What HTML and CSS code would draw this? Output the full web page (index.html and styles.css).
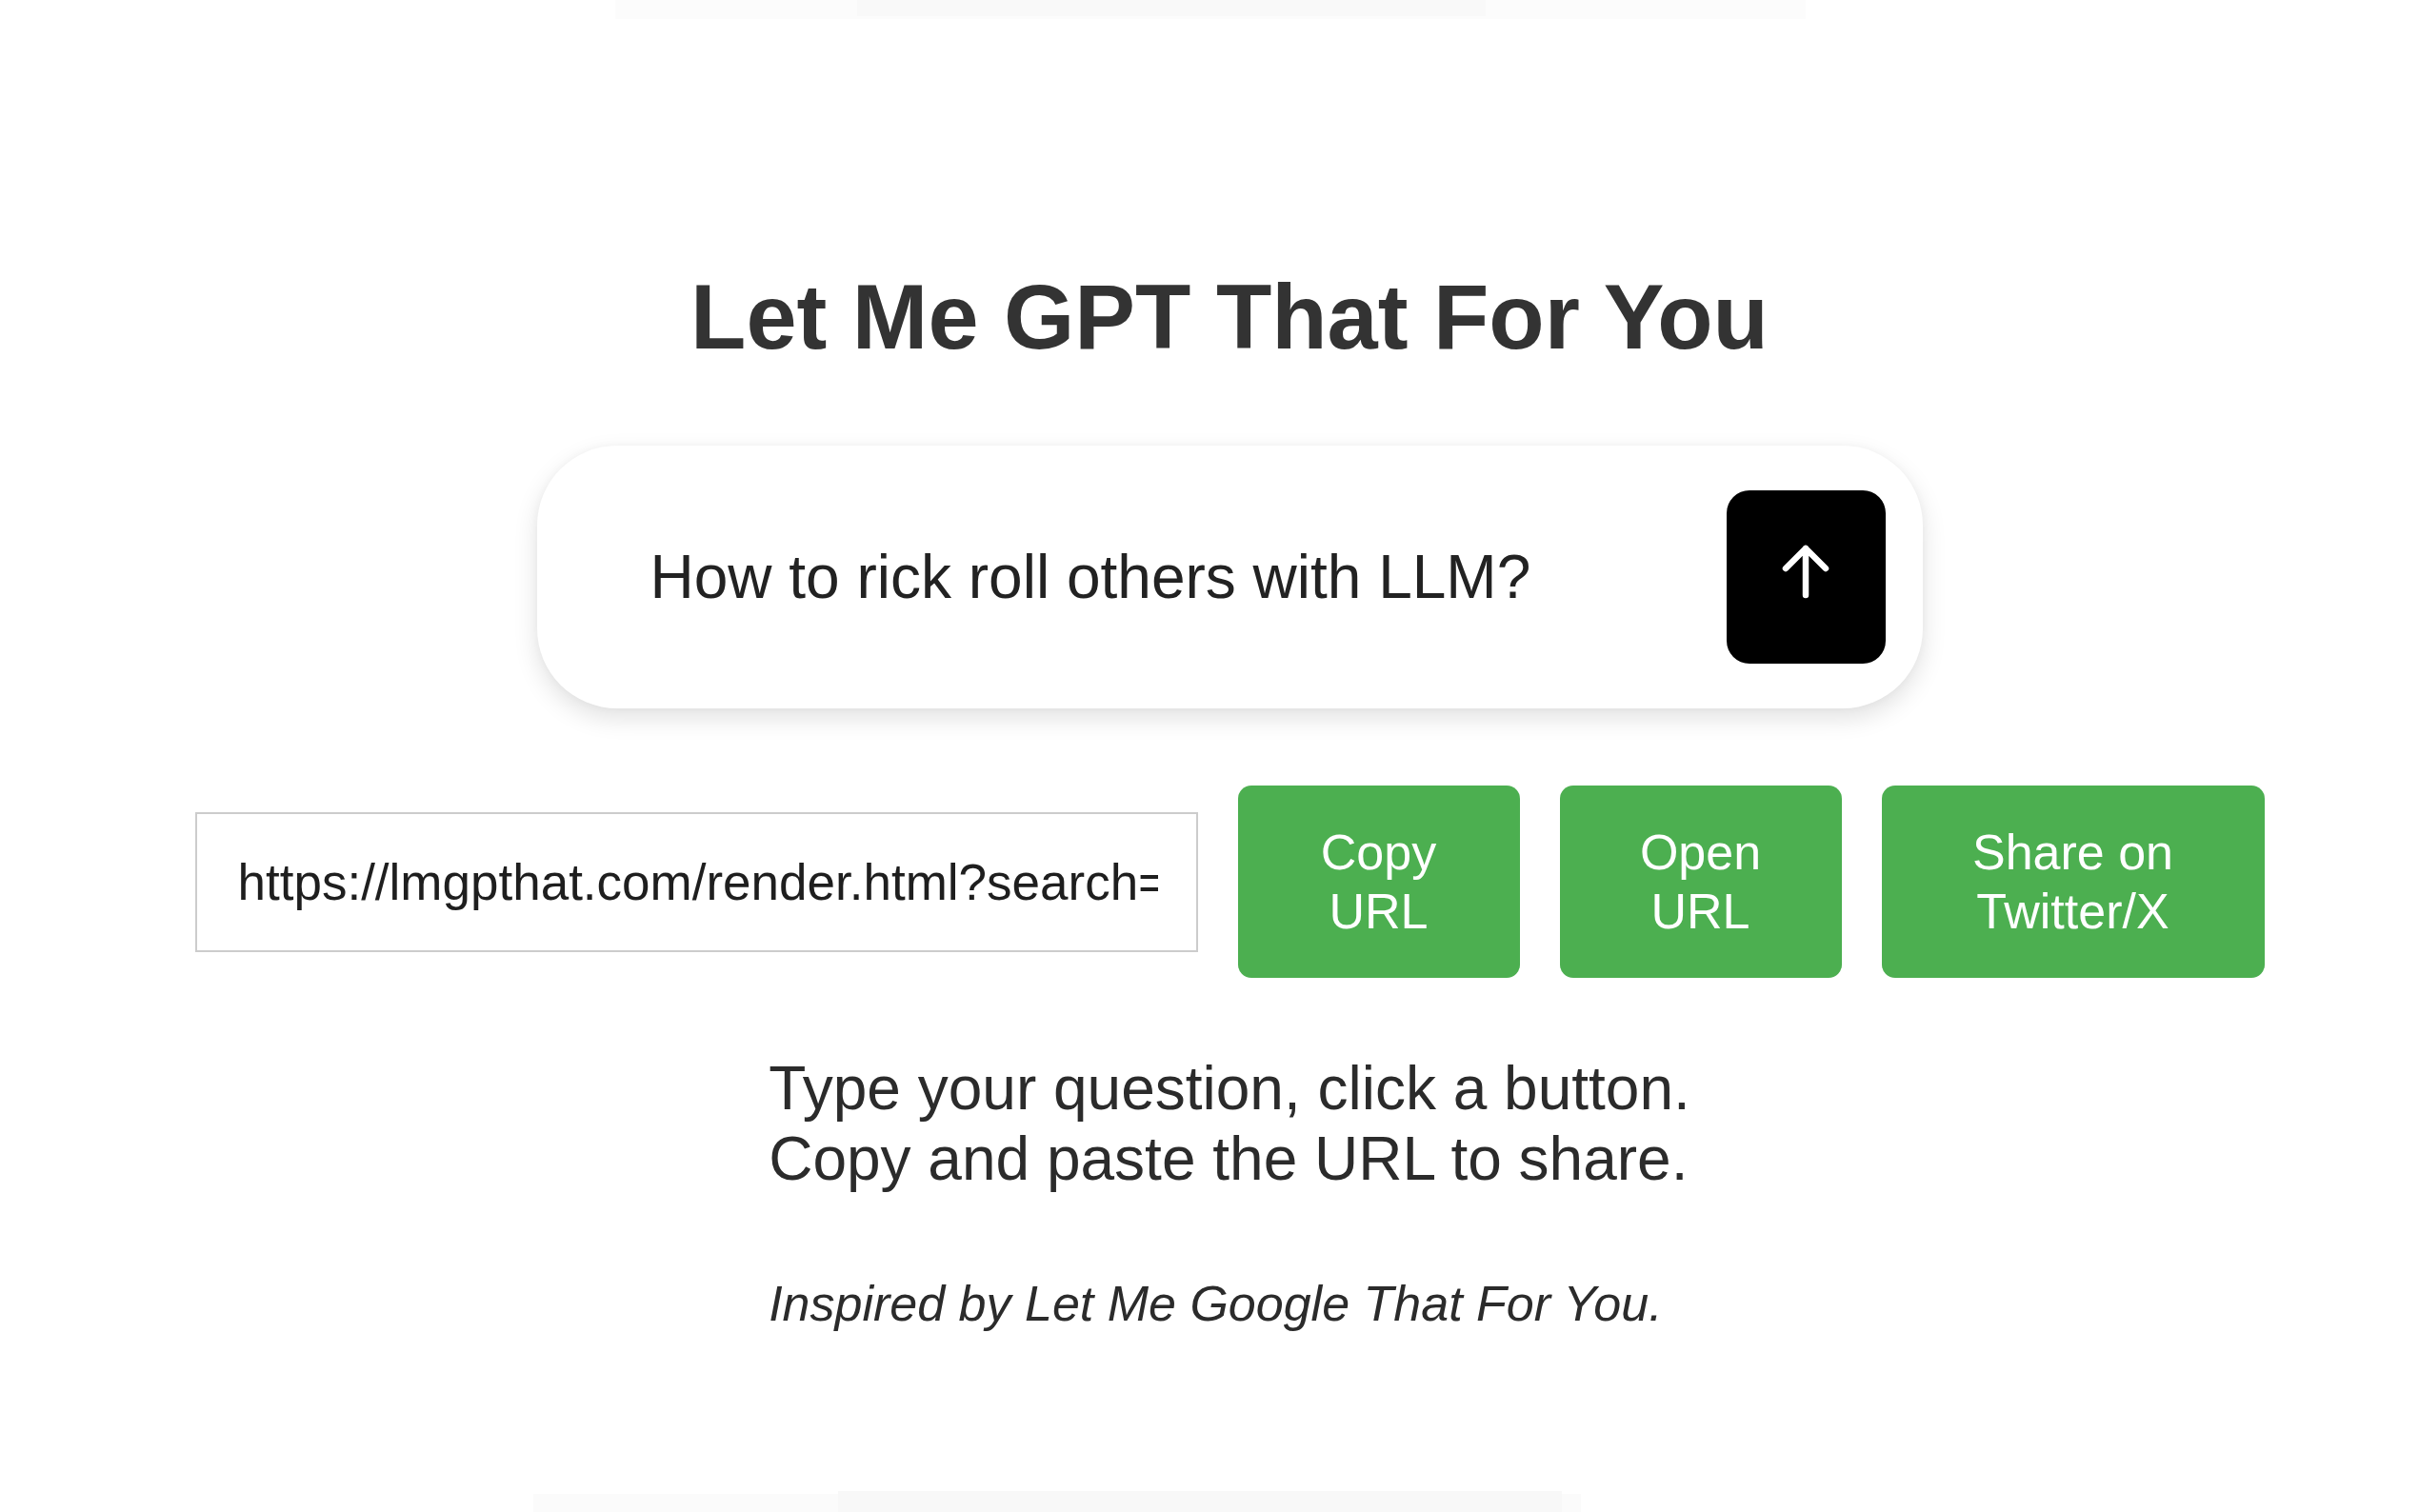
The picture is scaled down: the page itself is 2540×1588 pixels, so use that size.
FILE: index.html
```html
<!DOCTYPE html>
<html lang="en">
<head>
<meta charset="utf-8">
<title>Let Me GPT That For You</title>
<link rel="stylesheet" href="styles.css">
</head>
<body>
<main class="page">
  <h1 class="title">Let Me GPT That For You</h1>

  <div class="search-box">
    <input class="search-input" type="text" value="How to rick roll others with LLM?">
    <button class="send-btn" type="button" aria-label="Submit">
      <svg class="send-icon" viewBox="0 0 60 72" width="60" height="72" aria-hidden="true">
        <path d="M30 55 V6 M9 27 L30 6 L51 27" fill="none" stroke="#fff" stroke-width="6.5" stroke-linecap="round" stroke-linejoin="round"/>
      </svg>
    </button>
  </div>

  <div class="share-row">
    <input class="url-input" type="text" readonly value="https://lmgpthat.com/render.html?search=How%20to%20rick%20roll%20others%20with%20LLM%3F">
    <button class="green-btn btn-copy" type="button">Copy URL</button>
    <button class="green-btn btn-open" type="button">Open URL</button>
    <button class="green-btn btn-share" type="button">Share on Twitter/X</button>
  </div>

  <div class="info">
    <p class="instructions">Type your question, click a button.<br>Copy and paste the URL to share.</p>
    <p class="credit">Inspired by Let Me Google That For You.</p>
  </div>
</main>
</body>
</html>
```

FILE: styles.css
```css
html {
  height: 100%;
  background-color: #ffffff;
  background-image:
    linear-gradient(#f9f9f9, #f9f9f9),
    linear-gradient(#fcfcfc, #fcfcfc),
    linear-gradient(#f8f8f8, #f8f8f8),
    linear-gradient(#fbfbfb, #fbfbfb);
  background-repeat: no-repeat;
  background-size: 660px 17px, 1250px 20px, 760px 22px, 1100px 19px;
  background-position: 900px 0, 646px 0, 880px 100%, 560px 100%;
}

body {
  margin: 0;
  font-family: "Liberation Sans", Arial, Helvetica, sans-serif;
  color: #2b2b2b;
}

.page {
  display: flex;
  flex-direction: column;
  align-items: center;
  padding: 279px 0 0 42px;
}

.title {
  margin: 0;
  font-size: 95.5px;
  line-height: 109px;
  font-weight: 700;
  color: #333333;
}

.search-box {
  margin-top: 80px;
  width: 1455px;
  box-sizing: border-box;
  display: flex;
  align-items: center;
  padding: 47px 39px 47px 119px;
  background: #ffffff;
  border-radius: 84px;
  box-shadow: 0 10px 26px rgba(0, 0, 0, 0.12), 0 0 10px rgba(0, 0, 0, 0.03);
}

.search-input {
  flex: 1;
  min-width: 0;
  border: none;
  outline: none;
  background: transparent;
  padding: 0;
  font-family: inherit;
  font-size: 64px;
  color: #222222;
}

.send-btn {
  flex: none;
  width: 167px;
  height: 182px;
  border: none;
  border-radius: 24px;
  background: #000000;
  display: flex;
  align-items: center;
  justify-content: center;
  padding: 0;
  cursor: pointer;
}

.send-icon {
  display: block;
}

.share-row {
  margin-top: 81px;
  display: flex;
  align-items: center;
  gap: 42px;
}

.url-input {
  width: 1053px;
  height: 147px;
  box-sizing: border-box;
  border: 2px solid #cccccc;
  border-radius: 0;
  padding: 0 40px 0 43px;
  font-family: inherit;
  font-size: 53px;
  color: #1e1e1e;
  background: #ffffff;
  outline: none;
}

.green-btn {
  box-sizing: border-box;
  border: none;
  border-radius: 14px;
  background: #4caf50;
  color: #ffffff;
  font-family: inherit;
  font-size: 52px;
  line-height: 62px;
  padding: 39px 0;
  text-align: center;
  cursor: pointer;
}

.btn-copy,
.btn-open {
  width: 296px;
  padding-left: 70px;
  padding-right: 70px;
}

.btn-share {
  width: 402px;
  padding-left: 80px;
  padding-right: 80px;
}

.info {
  margin-top: 79px;
  text-align: left;
}

.instructions {
  margin: 0;
  font-size: 64px;
  line-height: 74px;
  color: #2b2b2b;
}

.credit {
  margin: 86px 0 0;
  font-size: 52px;
  line-height: 58px;
  font-style: italic;
  color: #2b2b2b;
}
```
